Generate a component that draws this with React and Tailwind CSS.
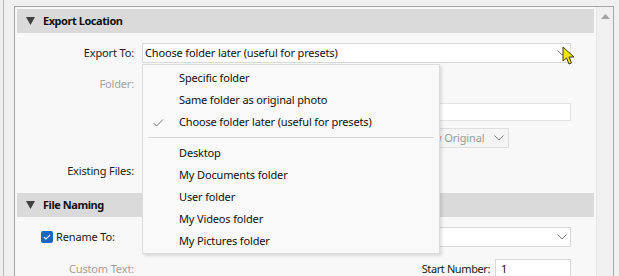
import React from 'react';

const font = { fontFamily: '"Noto Sans", "Open Sans", sans-serif' };

function Chevron() {
  return (
    <svg width="10" height="6" viewBox="0 0 10 6" className="shrink-0">
      <path d="M0.5 0.5 L5 5 L9.5 0.5" fill="none" stroke="#7a7a7a" strokeWidth="1" />
    </svg>
  );
}

function SectionHeader({ title }) {
  return (
    <div className="flex items-center h-[24px] bg-[#dadada] pl-[9px]">
      <svg width="9" height="8" viewBox="0 0 9 8" className="mr-[8px]">
        <path d="M0 0 H9 L4.5 8 Z" fill="#404040" />
      </svg>
      <span className="text-[11px] font-bold tracking-[-0.45px] text-[#111]">{title}</span>
    </div>
  );
}

function Label({ children, dim }) {
  return (
    <div className={`w-[118px] shrink-0 text-right text-[11px] tracking-[-0.15px] pr-[1px] ${dim ? 'text-[#a2a2a2]' : 'text-[#222]'}`}>
      {children}
    </div>
  );
}

function MenuItem({ children, checked }) {
  return (
    <div className="h-[22px] flex items-center relative text-[11px] tracking-[-0.15px] text-[#111] pl-[36px] whitespace-nowrap">
      {checked && (
        <svg width="11" height="8" viewBox="0 0 11 8" className="absolute left-[10px] top-[8px]">
          <path d="M0.5 4 L3.5 7 L10 0.5" fill="none" stroke="#777" strokeWidth="1" />
        </svg>
      )}
      {children}
    </div>
  );
}

export default function App() {
  return (
    <div className="w-[619px] h-[276px] bg-[#f0f0f0] overflow-hidden relative flex" style={font}>
      <div className="w-[3px] shrink-0" />
      <div className="w-px shrink-0 bg-[#b9b9b9]" />
      <div className="w-[10px] shrink-0" />
      <div className="mt-[6px] flex border-l border-t border-r border-[#a7a7a7] h-[300px]">
        <div className="w-[581px] px-[2px] pt-[2px] bg-[#f8f8f8] flex flex-col">
          <SectionHeader title="Export Location" />

          <div className="mt-[10px] h-[20px] flex items-center">
            <Label>Export To:</Label>
            <div className="ml-[7px] w-[429px] h-[20px] bg-white border border-[#d9d9d9] flex items-center justify-between pl-[2px] pr-[3px] text-[11px] tracking-[-0.15px] text-[#111]">
              <span>Choose folder later (useful for presets)</span>
              <Chevron />
            </div>
          </div>

          <div className="mt-[11px] h-[20px] flex items-center">
            <Label dim>Folder:</Label>
          </div>

          <div className="mt-[9px] h-[18px] flex items-center">
            <div className="w-[118px] shrink-0" />
            <div className="ml-[25px] w-[411px] h-[18px] bg-white border border-[#e2e2e2]" />
          </div>

          <div className="mt-[7px] h-[20px] flex items-center">
            <div className="w-[118px] shrink-0" />
            <div className="ml-[271px] w-[103px] h-[20px] border border-[#dedede] bg-[#f5f5f5] flex items-center justify-between pl-[4px] pr-[4px] text-[11px] tracking-[-0.15px] text-[#9a9a9a] whitespace-nowrap">
              <span>Below Original</span>
              <Chevron />
            </div>
          </div>

          <div className="mt-[13px] h-[20px] flex items-center">
            <Label>Existing Files:</Label>
          </div>

          <div className="mt-[12px]">
            <SectionHeader title="File Naming" />
          </div>

          <div className="mt-[10px] h-[20px] flex items-center">
            <div className="w-[118px] shrink-0 flex items-center pl-[24px]">
              <div className="w-[12px] h-[12px] rounded-[2px] bg-[#1a66c2] flex items-center justify-center">
                <svg width="8" height="6" viewBox="0 0 8 6">
                  <path d="M0.8 3 L3 5 L7.2 0.8" fill="none" stroke="#fff" strokeWidth="1.1" />
                </svg>
              </div>
              <span className="ml-[3px] text-[11px] tracking-[-0.15px] text-[#222] whitespace-nowrap">Rename To:</span>
            </div>
            <div className="ml-[7px] w-[429px] h-[20px] bg-white border border-[#d9d9d9] flex items-center justify-end pr-[3px]">
              <Chevron />
            </div>
          </div>

          <div className="mt-[12px] h-[20px] flex items-center">
            <Label dim>Custom Text:</Label>
            <div className="ml-auto flex items-center mr-[23px]">
              <span className="text-[11px] tracking-[-0.4px] text-[#222]">Start Number:</span>
              <div className="ml-[5px] w-[76px] h-[20px] bg-white border border-[#d9d9d9] flex items-center pl-[5px] text-[11px] text-[#111]">1</div>
            </div>
          </div>
        </div>

        <div className="w-[17px] bg-[#f0f0f0] border-l border-[#e6e6e6] flex justify-center pt-[7px]">
          <svg width="9" height="5" viewBox="0 0 9 5">
            <path d="M0 5 L4.5 0 L9 5 Z" fill="#a3a3a3" />
          </svg>
        </div>
      </div>

      {/* dropdown menu */}
      <div className="absolute left-[142px] top-[64px] w-[298px] bg-[#f9f9f9] border border-[#dcdcdc] shadow-[2px_2px_3px_rgba(0,0,0,0.12)] pt-[2px] pb-[1px]">
        <MenuItem>Specific folder</MenuItem>
        <MenuItem>Same folder as original photo</MenuItem>
        <MenuItem checked>Choose folder later (useful for presets)</MenuItem>
        <div className="h-[9px] flex items-center px-[5px]">
          <div className="h-px w-full bg-[#d8d8d8]" />
        </div>
        <MenuItem>Desktop</MenuItem>
        <MenuItem>My Documents folder</MenuItem>
        <MenuItem>User folder</MenuItem>
        <MenuItem>My Videos folder</MenuItem>
        <MenuItem>My Pictures folder</MenuItem>
      </div>

      {/* mouse cursor */}
      <svg className="absolute left-[562px] top-[46px]" width="14" height="20" viewBox="0 0 14 20">
        <path d="M1 1 L1 15 L4.5 12 L7 18 L9.5 17 L7 11 L12 11 Z" fill="#f2e600" stroke="#3a3a1a" strokeWidth="1" strokeLinejoin="round" />
      </svg>
    </div>
  );
}
